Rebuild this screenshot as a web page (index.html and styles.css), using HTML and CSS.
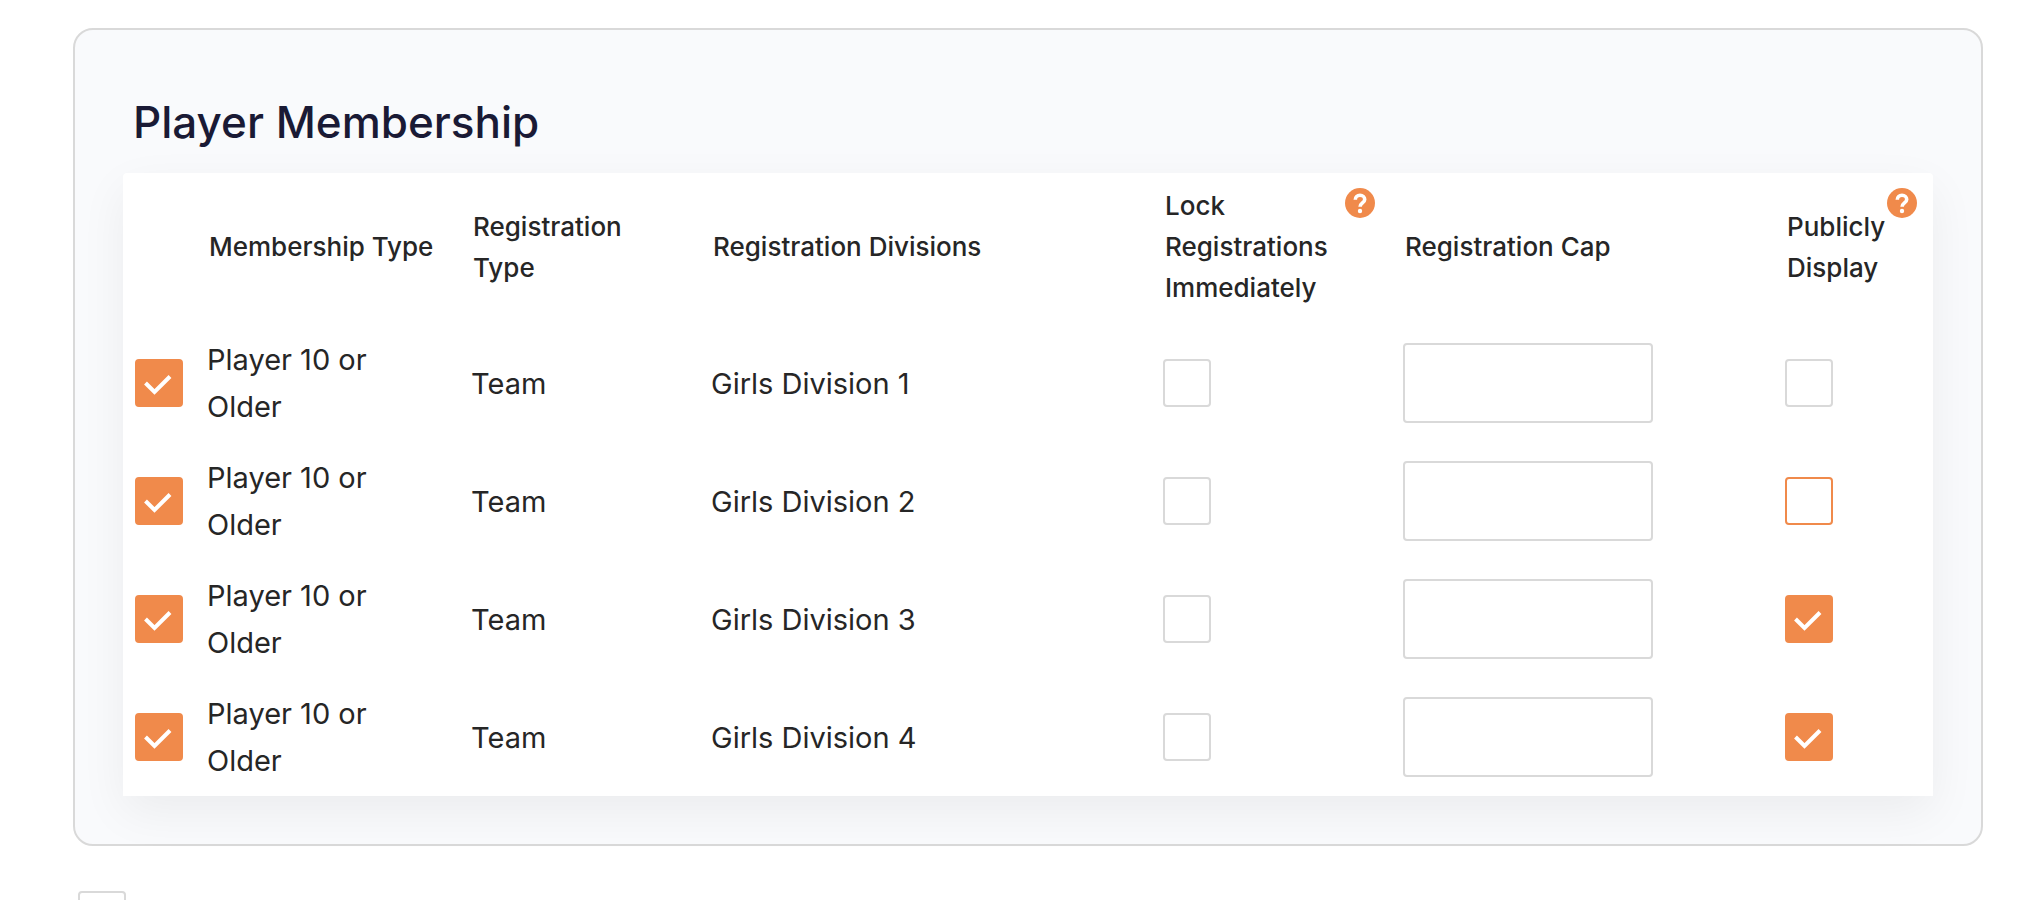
FILE: index.html
```html
<!doctype html>
<html lang="en">
<head>
    <meta charset="utf-8">
    <meta name="viewport" content="width=device-width, initial-scale=1">
    <title>Player Membership</title>
    <link rel="stylesheet" href="styles.css">
</head>
<body>

<main class="page">
    <section class="card" aria-labelledby="membership-heading">
        <h2 id="membership-heading" class="card-title">Player Membership</h2>

        <table class="membership-table">
            <colgroup>
                <col class="col-select">
                <col class="col-membership">
                <col class="col-type">
                <col class="col-divisions">
                <col class="col-lock">
                <col class="col-cap">
                <col class="col-public">
            </colgroup>
            <thead>
                <tr>
                    <td></td>
                    <th scope="col">Membership Type</th>
                    <th scope="col">Registration Type</th>
                    <th scope="col">Registration Divisions</th>
                    <th scope="col">
                        Lock Registrations Immediately
                        <button type="button" class="help" aria-label="About locking registrations">
                            <svg viewBox="0 0 30 30" aria-hidden="true">
                                <circle cx="15" cy="15" r="15"/>
                                <path d="M10.3 11.8C10.3 9 12.2 7.3 15 7.3s4.7 1.8 4.7 4.2c0 3.3-4.6 3.7-4.6 7.2"/>
                                <circle class="help-dot" cx="15" cy="23" r="2.2"/>
                            </svg>
                        </button>
                    </th>
                    <th scope="col">Registration Cap</th>
                    <th scope="col">
                        Publicly Display
                        <button type="button" class="help" aria-label="About public display">
                            <svg viewBox="0 0 30 30" aria-hidden="true">
                                <circle cx="15" cy="15" r="15"/>
                                <path d="M10.3 11.8C10.3 9 12.2 7.3 15 7.3s4.7 1.8 4.7 4.2c0 3.3-4.6 3.7-4.6 7.2"/>
                                <circle class="help-dot" cx="15" cy="23" r="2.2"/>
                            </svg>
                        </button>
                    </th>
                </tr>
            </thead>
            <tbody>
                <tr>
                    <td><input type="checkbox" class="checkbox" id="select-1" checked></td>
                    <td><label for="select-1">Player 10 or Older</label></td>
                    <td>Team</td>
                    <td>Girls Division 1</td>
                    <td><input type="checkbox" class="checkbox" aria-label="Lock registrations for Girls Division 1"></td>
                    <td><input type="text" class="cap-input" inputmode="numeric" aria-label="Registration cap for Girls Division 1"></td>
                    <td><input type="checkbox" class="checkbox" aria-label="Publicly display Girls Division 1"></td>
                </tr>
                <tr>
                    <td><input type="checkbox" class="checkbox" id="select-2" checked></td>
                    <td><label for="select-2">Player 10 or Older</label></td>
                    <td>Team</td>
                    <td>Girls Division 2</td>
                    <td><input type="checkbox" class="checkbox" aria-label="Lock registrations for Girls Division 2"></td>
                    <td><input type="text" class="cap-input" inputmode="numeric" aria-label="Registration cap for Girls Division 2"></td>
                    <td><input type="checkbox" class="checkbox checkbox-active" aria-label="Publicly display Girls Division 2"></td>
                </tr>
                <tr>
                    <td><input type="checkbox" class="checkbox" id="select-3" checked></td>
                    <td><label for="select-3">Player 10 or Older</label></td>
                    <td>Team</td>
                    <td>Girls Division 3</td>
                    <td><input type="checkbox" class="checkbox" aria-label="Lock registrations for Girls Division 3"></td>
                    <td><input type="text" class="cap-input" inputmode="numeric" aria-label="Registration cap for Girls Division 3"></td>
                    <td><input type="checkbox" class="checkbox" aria-label="Publicly display Girls Division 3" checked></td>
                </tr>
                <tr>
                    <td><input type="checkbox" class="checkbox" id="select-4" checked></td>
                    <td><label for="select-4">Player 10 or Older</label></td>
                    <td>Team</td>
                    <td>Girls Division 4</td>
                    <td><input type="checkbox" class="checkbox" aria-label="Lock registrations for Girls Division 4"></td>
                    <td><input type="text" class="cap-input" inputmode="numeric" aria-label="Registration cap for Girls Division 4"></td>
                    <td><input type="checkbox" class="checkbox" aria-label="Publicly display Girls Division 4" checked></td>
                </tr>
            </tbody>
        </table>
    </section>

    <div class="next-option">
        <input type="checkbox" class="checkbox" aria-label="Next option">
    </div>
</main>

</body>
</html>
```

FILE: styles.css
```css
:root {
    --accent: #f08a4b;
    --border: #d9d9d9;
    --text: #262626;
    --title: #1a1a35;
    --card-bg: #f9fafc;
}

* {
    box-sizing: border-box;
}

body {
    margin: 0;
    background: #fff;
    color: var(--text);
    font-family: Inter, "Liberation Sans", Arial, sans-serif;
    font-size: 29px;
    line-height: 47px;
}

.page {
    padding: 28px 59px 0 73px;
}

/* Card */
.card {
    padding: 58px 48px 48px;
    border: 2px solid var(--border);
    border-radius: 20px;
    background: var(--card-bg);
}

.card-title {
    margin: 0;
    padding: 0 10px 17px;
    color: var(--title);
    font-size: 44px;
    font-weight: 500;
    line-height: 68px;
}

/* Table */
.membership-table {
    width: 100%;
    table-layout: fixed;
    border-collapse: collapse;
    border-radius: 4px 4px 0 0;
    background: #fff;
    box-shadow: 0 16px 48px rgba(0, 0, 0, 0.06);
}

.col-select {
    width: 72px;
}

.col-membership {
    width: 264px;
}

.col-type,
.col-lock {
    width: 240px;
}

.col-cap {
    width: 382px;
}

.col-public {
    width: 160px;
}

th,
td {
    padding: 12px;
    text-align: left;
    vertical-align: middle;
}

th {
    position: relative;
    padding: 12px 14px 16px;
    font-size: 26px;
    font-weight: 500;
    line-height: 41px;
}

td label {
    display: block;
    padding-right: 24px;
}

/* Help icon in the corner of a header cell */
.help {
    position: absolute;
    top: 15px;
    right: 16px;
    width: 30px;
    height: 30px;
    padding: 0;
    border: 0;
    background: none;
    cursor: pointer;
}

.help svg {
    display: block;
    fill: var(--accent);
}

.help path {
    fill: none;
    stroke: #fff;
    stroke-width: 3.6;
}

.help .help-dot {
    fill: #fff;
}

/* Controls */
.checkbox {
    display: block;
    width: 48px;
    height: 48px;
    margin: 0;
    border: 2px solid var(--border);
    border-radius: 4px;
    background: #fff;
    appearance: none;
    cursor: pointer;
}

.checkbox:hover,
.checkbox-active {
    border-color: var(--accent);
}

.checkbox:checked {
    border-color: var(--accent);
    background: var(--accent) url("data:image/svg+xml,%3csvg xmlns='http://www.w3.org/2000/svg' viewBox='0 0 44 44'%3e%3cpath fill='none' stroke='%23fff' stroke-width='4' d='m8.5 22 9 9 15.5-15.5'/%3e%3c/svg%3e");
}

.cap-input {
    display: block;
    width: 250px;
    height: 80px;
    padding: 0 20px;
    border: 2px solid var(--border);
    border-radius: 4px;
    background: #fff;
    color: inherit;
    font: inherit;
}

.next-option {
    padding: 45px 5px 0;
}
```
